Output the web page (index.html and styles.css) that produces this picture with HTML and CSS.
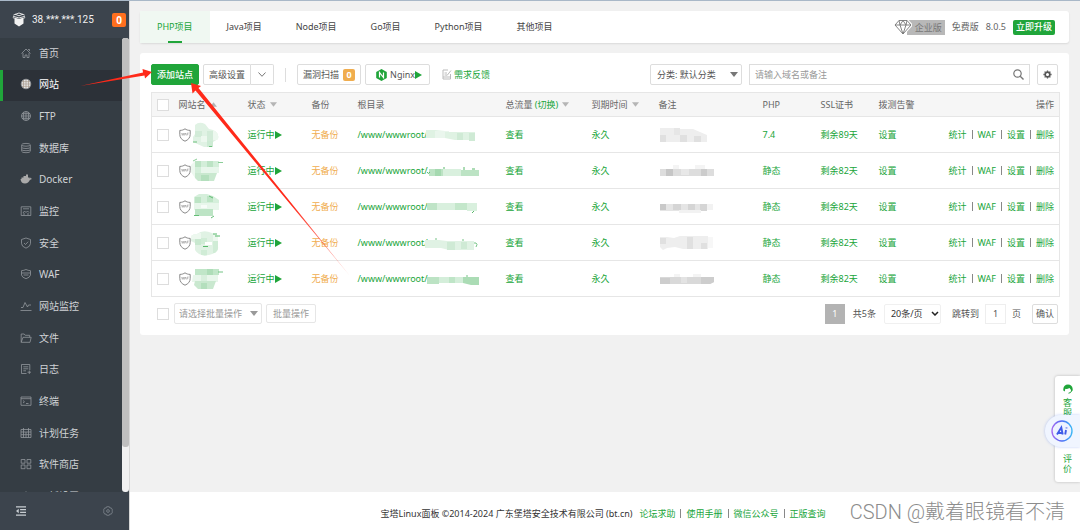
FILE: index.html
```html
<!DOCTYPE html>
<html lang="zh-CN">
<head>
<meta charset="utf-8">
<title>宝塔Linux面板</title>
<link rel="stylesheet" href="styles.css">
</head>
<body>
<svg class="defs" aria-hidden="true">
  <symbol id="i-play" viewBox="0 0 7 8"><path d="M0 0L7 4L0 8Z" fill="#20a53a"/></symbol>
  <symbol id="i-down" viewBox="0 0 8 5"><path d="M0 0h8L4 5z" fill="currentColor"/></symbol>
  <symbol id="i-up" viewBox="0 0 8 5"><path d="M0 5h8L4 0z" fill="currentColor"/></symbol>
  <symbol id="i-waf" viewBox="0 0 12 14"><path d="M6 .8C4.600 1.900 2.800 2.400.8 2.400V6.500c0 3.200 2 5.400 5.200 6.700 3.200-1.300 5.200-3.500 5.200-6.700V2.400C9.200 2.400 7.400 1.900 6 .8z" fill="none" stroke="#888" stroke-width="1"/><path d="M2.500 5l.8 2.400.8-2.400.8 2.400L5.600 5M5.800 7.400L6.500 5l.9 2.400M8.200 7.400V5h1.500M8.200 6.200h1.200" fill="none" stroke="#888" stroke-width=".5"/></symbol>

  <clipPath id="c1"><path d="M4 4Q8 0 14 3L18 8Q29 10 27 18L22 21V26H13L2 21V16L4 13Z"/></clipPath>
  <clipPath id="c4"><path d="M0 7Q2 5 6 5Q12 0 21 4L27 7V18Q28 24 18 26Q8 28 4 21V14L0 12Z"/></clipPath>
  <symbol id="m1" viewBox="0 0 34 28">
    <g clip-path="url(#c1)"><path fill="#e0f2e4" d="M0 0h34v28H0z"/><path fill="#d2ebd8" d="M4 10h7v6H4zM16 10h6v10h-6z"/><path fill="#edf8ef" d="M10 15h6v6h-6zM22 9h6v10h-6z"/><path fill="#cdebd4" d="M16 20h6v6h-6z"/></g>
    <path d="M2 21h4M18 25.500h3" stroke="#6fc07f"/>
  </symbol>
  <symbol id="m2" viewBox="0 0 34 28">
    <path fill="#edf8ef" d="M0 8l4-4v17l-4-6z"/><path fill="#bce3c4" d="M4 4h18v6H4z"/><path fill="#d3eed9" d="M10 4h6v6h-6zM22 4h6v6h-6zM4 10h6v6H4z"/><path fill="#e8f6eb" d="M10 10h18v6H10z"/><path fill="#c9e8cf" d="M4 16h22l-3 8H7l-3-3z"/><path fill="#b4dfbd" d="M10 18h8v6h-8z"/><path d="M27 5.500h5M2 4l4-2" stroke="#8bce98"/>
  </symbol>
  <symbol id="m3" viewBox="0 0 34 28">
    <path fill="#d5efdb" d="M3 4l5-3h8l6 2 6 4v10H3z"/><path fill="#bde4c5" d="M4 4h6v6H4zM16 3h6v6h-6z"/><path fill="#e8f6eb" d="M3 10h25v7H3z"/><path fill="#f7fcf8" d="M10 12h6v3h-6z"/><path fill="#bde4c5" d="M4 16h18v7H4z"/><path d="M3 22.500h5M20 25l3-2M18 3l4 2" stroke="#64bd76"/>
  </symbol>
  <symbol id="m4" viewBox="0 0 34 28">
    <g clip-path="url(#c4)"><path fill="#e0f2e4" d="M0 0h34v28H0z"/><path fill="#edf8ef" d="M0 4h10v6H0zM22 4h6v8h-6z"/><path fill="#d0ecd6" d="M10 9h6v6h-6zM22 12h6v12h-6zM10 21h6v6h-6z"/><path fill="#c8e8cf" d="M4 10h6v6H4z"/></g>
    <path d="M22 5h4M24 7h5M12 17.500h5" stroke="#57b86a"/><path fill="#fff" d="M14 13h7v3h-7z"/>
  </symbol>
  <symbol id="m5" viewBox="0 0 34 28">
    <path fill="#c0e6c8" d="M4 4h24v6H4z"/><path fill="#aeddb8" d="M16 4h6v6h-6z"/><path fill="#e8f6eb" d="M2 10h25v7H1z"/><path fill="#d8efdd" d="M10 10h6v6h-6z"/><path fill="#c9e8cf" d="M4 16h21l-3 8H7l-4-4z"/><path fill="#b4dfbd" d="M10 18h6v6h-6z"/><path d="M27 7l5 0" stroke="#73c384"/>
  </symbol>

  <symbol id="p1" viewBox="0 0 56 14"><path fill="#dff2e3" d="M1 2h9l10 1v7H1z"/><path fill="#eaf6ed" d="M10 3h14v7H10z"/><path fill="#dff2e3" d="M20 4h30v8H30l-10-2z"/><path fill="#cfead5" d="M32 5h6v7h-6zM44 5h6v8h-6z"/></symbol>
  <symbol id="p2" viewBox="0 0 56 14"><path fill="#bce3c4" d="M4 5h14v7H4z"/><path fill="#a5d9b0" d="M10 5h6v7h-6zM38 6h6v6h-6z"/><path fill="#d9f0de" d="M18 5h18v7H18z"/><path fill="#bce3c4" d="M36 6h18v6H36z"/><path d="M19 3v2M39 3v3M2 8q1 3 3 0M47 5h3" stroke="#58b86b" fill="none"/></symbol>
  <symbol id="p3" viewBox="0 0 56 14"><path fill="#bfe4c7" d="M2 3h16v7H2z"/><path fill="#d9f0de" d="M12 3h20v7H12zM42 3h10v8H42z"/><path fill="#c4e7cb" d="M30 3h12v7H30z"/><path d="M49 11l-2 2" stroke="#58b86b"/></symbol>
  <symbol id="p4" viewBox="0 0 56 14"><path fill="#e0f2e4" d="M0 4h14l8 1h27v9H24l-8-2H0z"/><path fill="#cfead5" d="M22 6h8v8h-8zM36 6h6v7h-6z"/><path d="M10 3h2M38 3v2M49 7h2q2 1 0 4" stroke="#75c485" fill="none"/></symbol>
  <symbol id="p5" viewBox="0 0 56 14"><path fill="#bce3c4" d="M2 5h12v7H2z"/><path fill="#d4eeda" d="M14 5h26v6H14z"/><path fill="#abdcb5" d="M38 5h16v8h-8l-8-2z"/><path fill="#bfe5c7" d="M24 5h6v6h-6z"/><path d="M42 3v2" stroke="#75c485"/></symbol>

  <symbol id="n1" viewBox="0 0 56 14"><path fill="#eee" d="M1 0h16v14H1zM16 1h18l14 6v7H16z"/><path fill="#e0e0e0" d="M1 7h6v7H1zM21 7h7v7h-7zM35 8h7v6h-7z"/><path fill="#e6e6e6" d="M15 0h6v7h-6z"/></symbol>
  <symbol id="n2" viewBox="0 0 56 14"><path fill="#ddd" d="M1 5h54v7H1z"/><path fill="#c6c6c6" d="M7 5h7v7H7z"/><path fill="#e8e8e8" d="M22 5h8v6h-8z"/><path fill="#f4f4f4" d="M14 1h6v4h-6zM36 1h10v4H36z"/><path fill="#ccc" d="M42 5h6v7h-6z"/></symbol>
  <symbol id="n3" viewBox="0 0 56 14"><path fill="#e5e5e5" d="M1 4h47v7H1z"/><path fill="#c9c9c9" d="M1 4h6v6H1z"/><path fill="#d5d5d5" d="M14 4h8v6h-8zM29 4h7v6h-7zM41 4h7v7h-7z"/><path fill="#f2f2f2" d="M48 4h6v6h-6zM20 10h22v3H20z"/></symbol>
  <symbol id="n4" viewBox="0 0 56 14"><path fill="#eee" d="M1 1h7l7 1 6-2h28v13H24l-8-2-8 1-4 2-3-3z"/><path fill="#e0e0e0" d="M1 2h6v6H1zM28 1h6v12h-6zM42 7h6v6h-6z"/><path fill="#f7f7f7" d="M49 1h5v11h-5z"/></symbol>
  <symbol id="n5" viewBox="0 0 56 14"><path fill="#d9d9d9" d="M1 5h54v5l-4 2H1z"/><path fill="#cdcdcd" d="M1 6h10v6H1zM42 5h13v5l-4 2h-9z"/><path fill="#e3e3e3" d="M22 5h6v6h-6z"/><path fill="#f4f4f4" d="M15 2h6v3h-6zM34 2h8v3h-8z"/></symbol>
</svg>

<aside class="side">
  <header class="side-head">
    <svg class="logo" viewBox="0 0 14 15"><path fill="#f2f2f2" d="M2.500 5.500L7 7l4.500-1.500v6L7 14.500l-4.500-3z"/><path d="M1 4.200L7 6l6-1.800M1.500 3L7 1l5.500 2M3 2.200l4 1.600 4-1.600M.8 5.500l1.700.8M13.200 5.500l-1.700.8" fill="none" stroke="#f2f2f2" stroke-width=".9"/></svg>
    <span class="ip">38.***.***.125</span>
    <span class="count">0</span>
  </header>
  <nav class="menu">
    <div class="menu-list">
      <a href="#"><svg viewBox="0 0 12 12"><path d="M1.500 6.500L6 2l4.500 4.500M3 6v4.500h2V8h2v2.500h2V6M8 2.500h1.500V4"/></svg>首页</a>
      <a href="#" class="on"><svg viewBox="0 0 12 12"><circle cx="6" cy="6" r="4.800" fill="#e6e6e6"/><path d="M6 1v10M1 6h10M3.500 2v8M8.500 2v8M2 3.700h8M2 8.300h8" stroke="#a08e80" stroke-width=".6"/></svg>网站</a>
      <a href="#"><svg viewBox="0 0 12 12"><circle cx="6" cy="6" r="4.500"/><path d="M6 1.500v9M1.500 6h9M2 3.700h8M2 8.300h8M4 2q-1.500 4 0 8M8 2q1.500 4 0 8"/></svg>FTP</a>
      <a href="#"><svg viewBox="0 0 12 12"><ellipse cx="6" cy="2.800" rx="4.300" ry="1.400"/><path d="M1.700 3v6.300q0 1.400 4.300 1.400t4.300-1.400V3M1.700 5.200q0 1.300 4.300 1.300t4.300-1.300M1.700 7.400q0 1.300 4.300 1.300t4.300-1.300"/></svg>数据库</a>
      <a href="#"><svg viewBox="0 0 12 12"><path fill="#aaa" stroke="none" d="M.5 6h1V4.500h2V3H6V1.500h2v3h1V6q.5-1.500 1-1.700l.6 1 1.200.2q-.3 1.200-1.800 1.300Q8.500 10.500 5 10.500 1 10.500.5 6z"/></svg>Docker</a>
      <a href="#"><svg viewBox="0 0 12 12"><path d="M1.200 1.800h9.600v8.700H1.200zM3 3.800h6M3 8l1.500-2 1.500 1.500L7.500 6 9 7.500M3 9h2M7 9h2"/></svg>监控</a>
      <a href="#"><svg viewBox="0 0 12 12"><path d="M6 1l4.500 1.500v4Q10.500 9.500 6 11.200 1.500 9.500 1.500 6.500v-4zM4 6l1.500 1.500L8.200 4.700"/></svg>安全</a>
      <a href="#"><svg viewBox="0 0 12 12"><path d="M6 1.500q2 1 4.500 1.200V7Q10 9.500 6 10.700 2 9.500 1.500 7V2.700Q4 2.500 6 1.500zM1.500 5h9M3.500 7h5"/></svg>WAF</a>
      <a href="#"><svg viewBox="0 0 12 12"><path d="M.5 10.500h11M1 7.500h2l2-5 2.500 4.500L8.500 5H11"/></svg>网站监控</a>
      <a href="#"><svg viewBox="0 0 12 12"><path d="M1.200 10.300V2h3l1 1.300h4.500v2M1.200 10.300L3 5.300h8.200l-1.200 5z"/></svg>文件</a>
      <a href="#"><svg viewBox="0 0 12 12"><path d="M6.500 10.500h-5v-9h8.300V7M3.300 3.800h5M3.300 5.800h5M3.300 7.800H6M9.300 7.500v3.500M7.500 9.200H11"/></svg>日志</a>
      <a href="#"><svg viewBox="0 0 12 12"><path d="M1 2h10v8.300H1zM1 3.700h10M3 5.500l1.500 1.300L3 8M6 8.500h2.500"/></svg>终端</a>
      <a href="#"><svg viewBox="0 0 12 12"><path d="M1 2.500h10v8H1zM1 5h10M3.500 1v9.500M6 5v5.500M8.500 1v9.500M1 7.700h10"/></svg>计划任务</a>
      <a href="#"><svg viewBox="0 0 12 12"><path d="M1.200 1.500h3.800v3.700H1.200zM7 1.500h3.800v3.700H7zM1.200 7h3.800v3.700H1.200zM7 7h3.800v3.700H7z"/></svg>软件商店</a>
      <a href="#"><svg viewBox="0 0 12 12"><circle cx="6" cy="6" r="4"/><circle cx="6" cy="6" r="1.500"/></svg>面板设置</a>
    </div>
    <span class="rail"><span class="thumb"></span></span>
  </nav>
  <footer class="side-foot">
    <button type="button" aria-label="收起菜单"><svg viewBox="0 0 11 11"><path d="M0 1h11M4.500 4h6.500M4.500 7h6.500M0 10h11" stroke="#c8cdd2" stroke-width="1.200"/><path d="M0 5.500L3 3v5z" fill="#c8cdd2"/></svg></button>
    <button type="button" aria-label="设置"><svg viewBox="0 0 11 11"><path d="M4 .8h3l.6 1.400 1.500-.1L10.500 4.500l-.8 1 .8 1L9.100 9l-1.500-.2L7 10.200H4l-.6-1.400L1.900 9 .5 6.500l.8-1-.8-1 1.400-2.400 1.500.1z" fill="none" stroke="#777f87"/><circle cx="5.500" cy="5.500" r="1.500" fill="none" stroke="#777f87"/></svg></button>
  </footer>
</aside>

<main class="main">
  <div class="content">
    <section class="tabs">
      <button type="button" class="tab on">PHP项目</button>
      <button type="button" class="tab">Java项目</button>
      <button type="button" class="tab">Node项目</button>
      <button type="button" class="tab">Go项目</button>
      <button type="button" class="tab">Python项目</button>
      <button type="button" class="tab">其他项目</button>
      <div class="version">
        <span class="ent"><svg viewBox="0 0 18 16"><path d="M5 1.500h8L17 6 9 15 1 6z" fill="#fff" stroke="#fff" stroke-width="3"/><path d="M5 1.500h8L17 6 9 15 1 6zM1 6h16M5 1.500L6 6l3 9 3-9 1-4.500M6 6l3-4.500L12 6" fill="none" stroke="#777" stroke-width=".9"/></svg><b>企业版</b></span>
        <span>免费版</span>
        <span>8.0.5</span>
        <button type="button" class="upgrade">立即升级</button>
      </div>
    </section>

    <section class="card">
      <div class="toolbar">
        <button type="button" class="btn primary">添加站点</button>
        <div class="group">
          <button type="button" class="btn">高级设置</button>
          <button type="button" class="btn more" aria-label="更多"><svg viewBox="0 0 8 5"><path d="M.5.5L4 4.300 7.500.500" fill="none" stroke="#777"/></svg></button>
        </div>
        <span class="split"></span>
        <button type="button" class="btn">漏洞扫描<i>0</i></button>
        <button type="button" class="btn nginx"><svg class="ng" viewBox="0 0 11 12"><path d="M5.500 0L10.800 3v6L5.500 12 .2 9V3z" fill="#20a53a"/><path d="M3.500 8.500v-5l4 5v-5" fill="none" stroke="#fff" stroke-width="1.200"/></svg>Nginx<svg class="play"><use href="#i-play"/></svg></button>
        <a href="#" class="feedback"><svg viewBox="0 0 10 11"><path d="M6 1H1v9h7.500V5M2.500 4H5M2.500 6H5M1 8h7.500M5 6.500l4-5" fill="none" stroke="#bbb"/></svg>需求反馈</a>
        <label class="pick cat"><select aria-label="分类"><option>分类: 默认分类</option></select><svg class="tri"><use href="#i-down"/></svg></label>
        <label class="search"><input type="text" placeholder="请输入域名或备注" aria-label="搜索"><svg viewBox="0 0 11 11"><circle cx="4.500" cy="4.500" r="3.700" fill="none" stroke="#777" stroke-width="1.200"/><path d="M7.200 7.200l3.300 3.300" stroke="#777" stroke-width="1.400"/></svg></label>
        <button type="button" class="btn gear" aria-label="表格设置"><svg viewBox="0 0 10 10"><circle cx="5" cy="5" r="2.600" fill="none" stroke="#555" stroke-width="1.800"/><path d="M5 .5v1.500M5 8v1.500M.5 5H2M8 5h1.500M1.800 1.800l1 1M7.200 7.200l1 1M8.200 1.800l-1 1M1.800 8.200l1-1" stroke="#555" stroke-width="1.400"/></svg></button>
      </div>

      <table class="sites">
        <colgroup><col class="w-check"><col class="w-name"><col class="w-state"><col class="w-bak"><col class="w-path"><col class="w-flow"><col class="w-exp"><col class="w-note"><col class="w-php"><col class="w-php"><col class="w-alert"><col class="w-ops"></colgroup>
        <thead><tr>
          <th><input type="checkbox" aria-label="全选"></th>
          <th>网站名<svg class="sort"><use href="#i-up"/></svg></th>
          <th>状态<svg class="sort"><use href="#i-down"/></svg></th>
          <th>备份</th><th>根目录</th>
          <th>总流量 <a href="#">(切换)</a><svg class="sort"><use href="#i-down"/></svg></th>
          <th>到期时间<svg class="sort"><use href="#i-down"/></svg></th>
          <th>备注</th><th>PHP</th><th>SSL证书</th><th>拨测告警</th><th class="ops">操作</th>
        </tr></thead>
        <tbody>
          <tr><td><input type="checkbox" aria-label="选择"></td><td><div class="site"><svg class="waf"><use href="#i-waf"/></svg><svg class="mosaic"><use href="#m1"/></svg></div></td><td><a href="#">运行中<svg class="play"><use href="#i-play"/></svg></a></td><td><a href="#" class="warn">无备份</a></td><td><div class="path"><a href="#">/www/wwwroot/</a><svg class="blot"><use href="#p1"/></svg></div></td><td><a href="#">查看</a></td><td><a href="#">永久</a></td><td><svg class="blot"><use href="#n1"/></svg></td><td><a href="#">7.4</a></td><td><a href="#">剩余89天</a></td><td><a href="#">设置</a></td><td class="ops"><div><a href="#">统计</a><s></s><a href="#">WAF</a><s></s><a href="#">设置</a><s></s><a href="#">删除</a></div></td></tr>
          <tr><td><input type="checkbox" aria-label="选择"></td><td><div class="site"><svg class="waf"><use href="#i-waf"/></svg><svg class="mosaic"><use href="#m2"/></svg></div></td><td><a href="#">运行中<svg class="play"><use href="#i-play"/></svg></a></td><td><a href="#" class="warn">无备份</a></td><td><div class="path"><a href="#">/www/wwwroot/</a><svg class="blot"><use href="#p2"/></svg></div></td><td><a href="#">查看</a></td><td><a href="#">永久</a></td><td><svg class="blot"><use href="#n2"/></svg></td><td><a href="#">静态</a></td><td><a href="#">剩余82天</a></td><td><a href="#">设置</a></td><td class="ops"><div><a href="#">统计</a><s></s><a href="#">WAF</a><s></s><a href="#">设置</a><s></s><a href="#">删除</a></div></td></tr>
          <tr><td><input type="checkbox" aria-label="选择"></td><td><div class="site"><svg class="waf"><use href="#i-waf"/></svg><svg class="mosaic"><use href="#m3"/></svg></div></td><td><a href="#">运行中<svg class="play"><use href="#i-play"/></svg></a></td><td><a href="#" class="warn">无备份</a></td><td><div class="path"><a href="#">/www/wwwroot/</a><svg class="blot"><use href="#p3"/></svg></div></td><td><a href="#">查看</a></td><td><a href="#">永久</a></td><td><svg class="blot"><use href="#n3"/></svg></td><td><a href="#">静态</a></td><td><a href="#">剩余82天</a></td><td><a href="#">设置</a></td><td class="ops"><div><a href="#">统计</a><s></s><a href="#">WAF</a><s></s><a href="#">设置</a><s></s><a href="#">删除</a></div></td></tr>
          <tr><td><input type="checkbox" aria-label="选择"></td><td><div class="site"><svg class="waf"><use href="#i-waf"/></svg><svg class="mosaic"><use href="#m4"/></svg></div></td><td><a href="#">运行中<svg class="play"><use href="#i-play"/></svg></a></td><td><a href="#" class="warn">无备份</a></td><td><div class="path"><a href="#">/www/wwwroot/</a><svg class="blot"><use href="#p4"/></svg></div></td><td><a href="#">查看</a></td><td><a href="#">永久</a></td><td><svg class="blot"><use href="#n4"/></svg></td><td><a href="#">静态</a></td><td><a href="#">剩余82天</a></td><td><a href="#">设置</a></td><td class="ops"><div><a href="#">统计</a><s></s><a href="#">WAF</a><s></s><a href="#">设置</a><s></s><a href="#">删除</a></div></td></tr>
          <tr><td><input type="checkbox" aria-label="选择"></td><td><div class="site"><svg class="waf"><use href="#i-waf"/></svg><svg class="mosaic"><use href="#m5"/></svg></div></td><td><a href="#">运行中<svg class="play"><use href="#i-play"/></svg></a></td><td><a href="#" class="warn">无备份</a></td><td><div class="path"><a href="#">/www/wwwroot/</a><svg class="blot"><use href="#p5"/></svg></div></td><td><a href="#">查看</a></td><td><a href="#">永久</a></td><td><svg class="blot"><use href="#n5"/></svg></td><td><a href="#">静态</a></td><td><a href="#">剩余82天</a></td><td><a href="#">设置</a></td><td class="ops"><div><a href="#">统计</a><s></s><a href="#">WAF</a><s></s><a href="#">设置</a><s></s><a href="#">删除</a></div></td></tr>
        </tbody>
      </table>

      <div class="bottom">
        <input type="checkbox" aria-label="全选">
        <label class="pick batch"><select aria-label="批量操作"><option>请选择批量操作</option></select><svg class="tri"><use href="#i-down"/></svg></label>
        <button type="button" class="btn dim">批量操作</button>
        <div class="pager">
          <span class="cur">1</span>
          <span class="total">共5条</span>
          <label class="pick size"><select aria-label="每页条数"><option>20条/页</option></select><svg class="chev" viewBox="0 0 8 5"><path d="M1 1l3 3 3-3" fill="none" stroke="#222" stroke-width="1.500"/></svg></label>
          <label class="jump">跳转到<input type="text" value="1">页</label>
          <button type="button" class="btn ok">确认</button>
        </div>
      </div>
    </section>
  </div>

  <footer class="foot">
    <span>宝塔Linux面板 ©2014-2024 广东堡塔安全技术有限公司 (bt.cn)</span>
    <nav><a href="#">论坛求助</a><s></s><a href="#">使用手册</a><s></s><a href="#">微信公众号</a><s></s><a href="#">正版查询</a></nav>
  </footer>
</main>

<div class="help">
  <svg viewBox="0 0 10 10"><path d="M.3 6.500V5Q.8.500 5 .500T9.700 5v1.500L8.300 7.500Q8 5 6.500 4 4 5.500 2.300 4.800L1.800 7.500z" fill="#20a53a"/><path d="M8.500 7q-.5 2-3 2.200" fill="none" stroke="#20a53a"/></svg>
  <a href="#">客服</a>
  <a href="#">评价</a>
</div>
<button type="button" class="ai" aria-label="AI 助手">
  <svg viewBox="0 0 22 22"><defs><linearGradient id="ring" x1="0" y1="0" x2="1" y2="0"><stop offset="0" stop-color="#a56bf0"/><stop offset=".5" stop-color="#4b6bf5"/><stop offset="1" stop-color="#3fb8f5"/></linearGradient></defs><circle cx="11" cy="11" r="10" fill="#eef2ff" stroke="url(#ring)" stroke-width="1.400"/><path d="M6 14.500L10.300 7.500l1.400 7M8 13h2.500M15 10l-.8 4.500M15.500 7.500l-.1.900" fill="none" stroke="#3f5be8" stroke-width="1.900"/></svg>
</button>
<div class="mark">CSDN @戴着眼镜看不清</div>

<svg class="arrows" width="360" height="290" viewBox="0 0 360 290" aria-hidden="true">
  <defs><linearGradient id="fade" gradientUnits="userSpaceOnUse" x1="348" y1="276" x2="290" y2="205"><stop offset="0" stop-color="#ff2a1a" stop-opacity=".3"/><stop offset="1" stop-color="#ff2a1a"/></linearGradient></defs>
  <path fill="#ff2a1a" d="M80 86L143 72.500 142.500 69 152 72 145 78.500 144.500 75.500z"/>
  <path fill="url(#fade)" d="M350 276L195.500 90.500 192.500 93.500 191 83 201 86 198.500 88z"/>
</svg>
</body>
</html>
```
FILE: styles.css
```css
* { box-sizing: border-box; }
html, body { height: 100%; margin: 0; }
body {
  display: flex;
  position: relative;
  overflow: hidden;
  border-top: 1px solid #a9b8c8;
  background: #f1f1f1;
  color: #666;
  font: 9px/12px "Noto Sans", "Noto Sans CJK SC", sans-serif;
}
a { color: #20a53a; text-decoration: none; }
s { text-decoration: none; width: 1px; height: 9px; background: #888; }
button, input, select { font: inherit; color: inherit; margin: 0; }
button { padding: 0; border: 0; background: none; white-space: nowrap; }
svg { flex: none; }
.defs { position: absolute; width: 0; height: 0; }

input[type="checkbox"] {
  appearance: none;
  display: block;
  width: 12px;
  height: 12px;
  border: 1px solid #ddd;
  background: #fff;
}

/* sidebar */
.side {
  display: flex;
  flex-direction: column;
  width: 130px;
  flex: none;
  background: #353d44;
  border-right: 1px solid #d8d8d8;
}
.side-head {
  display: flex;
  align-items: center;
  height: 37px;
  padding: 0 3px 0 12px;
  background: #3c444d;
  color: #f0f0f0;
}
.logo { width: 14px; height: 15px; margin-right: 6px; }
.ip { font: 10px/14px Roboto, sans-serif; }
.count {
  width: 14px;
  margin-left: auto;
  border-radius: 2px;
  background: #ff6f1e;
  color: #fff;
  font-size: 10px;
  font-weight: bold;
  line-height: 14px;
  text-align: center;
}
.menu { display: flex; flex: 1; min-height: 0; overflow: hidden; }
.menu-list { display: grid; grid-template-rows: repeat(15, 1fr); flex: 1; height: 475px; }
.menu-list a {
  display: flex;
  align-items: center;
  gap: 7px;
  padding: 0 0 2px 17px;
  border-left: 3px solid transparent;
  color: #d0d3d6;
  font-size: 10px;
}
.menu-list a.on { border-color: #20a53a; background: #2c3138; color: #fff; }
.menu-list svg { width: 12px; height: 12px; fill: none; stroke: #92979c; stroke-width: .8; }
.rail { width: 7px; border-radius: 3px; background: #f1f1f1; }
.thumb { display: block; height: 90%; border-radius: 3px; background: #bfbfbf; }
.side-foot {
  display: flex;
  align-items: center;
  justify-content: space-between;
  height: 38px;
  padding: 0 16px;
  background: #3c444d;
}
.side-foot svg { display: block; width: 10px; height: 10px; }

/* main column */
.main { display: flex; flex-direction: column; flex: 1; min-width: 0; }
.content { flex: 1; padding: 10px 11px 0 10px; }
.tabs {
  display: flex;
  height: 32px;
  margin-bottom: 10px;
  border-radius: 3px;
  background: #fff;
  box-shadow: 0 1px 2px rgba(0, 0, 0, .1);
}
.tab { position: relative; padding: 0 17px; color: #444; }
.tab.on { background: #f0f8f2; color: #20a53a; }
.tab.on::after {
  content: "";
  position: absolute;
  left: 28px;
  right: 28px;
  bottom: 0;
  height: 2px;
  background: #20a53a;
}
.version { display: flex; align-items: center; gap: 7px; margin-left: auto; padding-right: 14px; }
.ent { display: flex; align-items: center; }
.ent svg { width: 18px; height: 16px; z-index: 1; }
.ent b {
  margin-left: -5px;
  padding: 0 3px 0 8px;
  background: #b8b8b8;
  color: #777;
  font-weight: normal;
  line-height: 15px;
}
.upgrade { height: 15px; padding: 0 3px; border-radius: 2px; background: #20a53a; color: #fff; font-weight: 500; }

.card { padding: 11px; border-radius: 3px; background: #fff; }
.toolbar { display: flex; align-items: center; gap: 4px; height: 21px; margin-bottom: 7px; }
.btn {
  display: flex;
  align-items: center;
  height: 21px;
  padding: 0 5px;
  border: 1px solid #ddd;
  border-radius: 2px;
  background: #fff;
  color: #555;
}
.primary { border-color: #20a53a; background: #20a53a; color: #fff; font-weight: 500; }
.group { display: flex; }
.group .btn:first-child { border-radius: 2px 0 0 2px; }
.more { border-left: 0; border-radius: 0 2px 2px 0; padding: 0 7px; }
.more svg { width: 8px; height: 5px; }
.split { width: 1px; height: 14px; margin: 0 7px; background: #ddd; }
.btn i {
  width: 12px;
  margin-left: 4px;
  border-radius: 2px;
  background: #f0ad4e;
  color: #fff;
  font-style: normal;
  font-weight: bold;
}
.nginx { padding: 0 7px 0 10px; }
.ng { width: 11px; height: 12px; margin-right: 3px; }
.play { width: 7px; height: 8px; }
.feedback { display: flex; align-items: center; gap: 2px; margin-left: 8px; }
.feedback svg { width: 10px; height: 11px; }
.pick { position: relative; display: flex; align-items: center; }
.pick select {
  appearance: none;
  width: 100%;
  height: 21px;
  padding: 0 6px;
  border: 1px solid #ddd;
  border-radius: 2px;
  background: #fff;
  color: #555;
}
.pick svg { position: absolute; right: 4px; pointer-events: none; }
.tri { width: 8px; height: 5px; color: #777; }
.cat { width: 92px; margin: 0 3px 0 auto; }
.search { position: relative; display: flex; align-items: center; width: 281px; margin-right: 3px; }
.search input { width: 100%; height: 21px; padding: 0 5px; border: 1px solid #ddd; outline: 0; }
.search input::placeholder { color: #999; }
.search svg { position: absolute; right: 6px; width: 11px; height: 11px; }
.gear { padding: 0 5px; }
.gear svg { width: 9px; height: 9px; }

/* site table */
.sites {
  width: 100%;
  table-layout: fixed;
  border-collapse: collapse;
  border: 1px solid #e6e6e6;
}
.w-check { width: 22px; }
.w-name { width: 69px; }
.w-state { width: 64px; }
.w-bak { width: 46px; }
.w-path { width: 148px; }
.w-flow { width: 86px; }
.w-exp { width: 67px; }
.w-note { width: 104px; }
.w-php { width: 58px; }
.w-alert { width: 60px; }
.w-ops { width: 126px; }
.sites th, .sites td {
  height: 36px;
  padding: 0 0 0 5px;
  border-bottom: 1px solid #e6e6e6;
  text-align: left;
  font-weight: normal;
  white-space: nowrap;
}
.sites th { height: 24px; background: #f6f6f6; }
.sites .ops { padding-right: 5px; text-align: right; }
.ops div { display: flex; align-items: center; justify-content: flex-end; gap: 5px; }
.sort { width: 7px; height: 5px; margin-left: 4px; vertical-align: 1px; color: #b5b5b5; }
.site { display: flex; align-items: center; }
.waf { width: 12px; height: 14px; }
.mosaic { width: 34px; height: 28px; }
.path { display: flex; align-items: center; }
.path .blot { margin-left: -3px; }
.blot { display: block; width: 56px; height: 14px; }
td .play { vertical-align: -1px; }
.warn { color: #f0ad4e; }

.bottom { display: flex; align-items: center; gap: 4px; margin-top: 6px; padding-left: 6px; }
.batch { width: 88px; margin-left: 1px; }
.batch select { padding: 0 4px; border-color: #e6e6e6; color: #999; }
.batch .tri { color: #999; }
.dim { height: 19px; padding: 0 6px; border-color: #e6e6e6; color: #999; }
.pager { display: flex; align-items: center; margin-left: auto; color: #555; }
.cur { width: 20px; background: #b3b3b3; color: #fff; line-height: 20px; text-align: center; }
.total { padding: 0 8px; }
.size { width: 57px; }
.size select { height: 20px; border-color: #f0f0f0; color: #333; }
.size svg { right: 2px; width: 8px; height: 5px; }
.jump { display: flex; align-items: center; gap: 6px; margin: 0 11px; }
.jump input { width: 21px; height: 20px; padding: 0; border: 1px solid #eee; text-align: center; }
.ok { height: 20px; padding: 0 3px; }

.foot {
  display: flex;
  align-items: center;
  justify-content: center;
  gap: 7px;
  height: 38px;
  padding: 5px 4px 0 0;
  background: #fff;
  color: #333;
}
.foot nav { display: flex; align-items: center; gap: 5px; }

/* floating widgets */
.help {
  position: absolute;
  right: 0;
  top: 375px;
  display: flex;
  flex-direction: column;
  align-items: center;
  width: 25px;
  height: 106px;
  padding: 8px 0;
  border-radius: 3px 0 0 3px;
  background: #fff;
  box-shadow: 0 0 3px rgba(0, 0, 0, .25);
}
.help svg { width: 10px; height: 10px; margin-bottom: 4px; }
.help a { width: 9px; line-height: 10px; }
.help a:last-child { margin-top: auto; }
.ai {
  position: absolute;
  right: 0;
  top: 414px;
  width: 35px;
  height: 32px;
  padding-left: 6px;
  border-radius: 16px 0 0 16px;
  background: #f0f5ff;
  box-shadow: 0 0 3px rgba(90, 130, 240, .4);
  text-align: left;
}
.ai svg { display: block; width: 22px; height: 22px; }
.mark {
  position: absolute;
  right: 15px;
  bottom: 4px;
  color: #8c8c8c;
  font: 300 20px/28px Roboto, "Noto Sans CJK SC", sans-serif;
  text-shadow: 0 0 1px #fff;
}
.arrows { position: absolute; left: 0; top: -1px; pointer-events: none; }
```
